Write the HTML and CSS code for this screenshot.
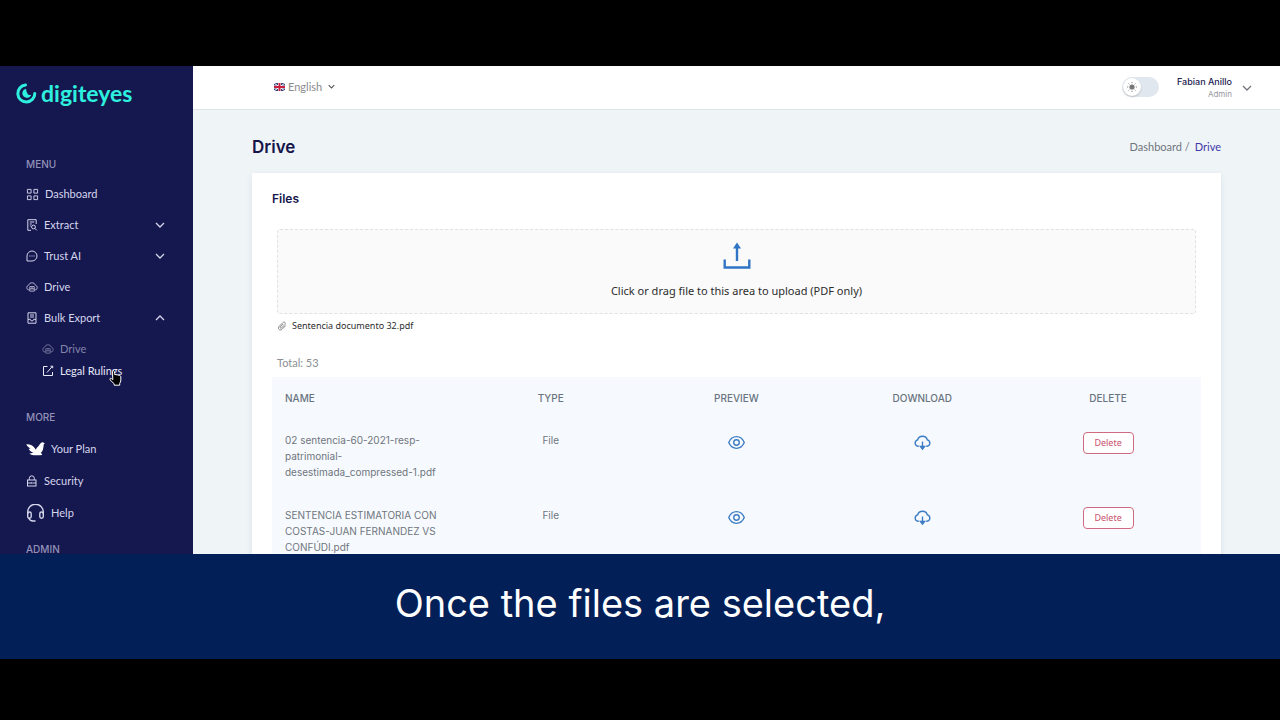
FILE: index.html
```
<!DOCTYPE html>
<html lang="en">
<head>
    <meta charset="UTF-8">
    <meta name="viewport" content="width=device-width, initial-scale=1.0">
    <title>Digiteyes - Drive</title>
    <link rel="stylesheet" href="styles.css">
</head>
<body>
    <!-- shared icons -->
    <svg class="sprite" width="0" height="0" aria-hidden="true">
        <symbol id="i-chevron" viewBox="0 0 10 10"><path d="M1 3l4 4 4-4"/></symbol>
        <symbol id="i-drive" viewBox="0 0 16 16"><path d="M4.5 12H4a3.2 3.2 0 0 1-.6-6.3 4.8 4.8 0 0 1 9.2 0A3.2 3.2 0 0 1 12 12h-.5M5 7.5h6v6H5zM5 10.5h6M8 7.5v3"/></symbol>
        <symbol id="i-eye" viewBox="0 0 16 16"><path d="M.7 8C2.300 4.300 4.900 2.500 8 2.500S13.700 4.300 15.300 8C13.700 11.700 11.100 13.500 8 13.500S2.300 11.700.7 8z"/><circle cx="8" cy="8" r="2.600"/></symbol>
        <symbol id="i-download" viewBox="0 0 16 16"><path d="M4.500 11.500H3.800a3 3 0 0 1-.4-5.900 4.800 4.800 0 0 1 9.200 0 3 3 0 0 1-.4 5.900h-.7M8 7v6.500"/><path class="solid" d="M6 11.700h4l-2 2.600z"/></symbol>
    </svg>

    <div class="app">
        <aside class="sidebar">
            <a class="logo" href="#">
                <svg viewBox="0 0 21 21" width="21" height="21">
                    <path class="logo-ring" d="M9.500 2A8.500 8.500 0 1 0 18.800 10.500"/>
                    <path class="logo-dot" d="M10 5.700a4.600 4.600 0 1 0 5.300 6c-1.600.6-3 .1-3.900-1.300-.9-1.400-1.100-3-1.400-4.700z"/>
                </svg>
                <span>digiteyes</span>
            </a>

            <h3>MENU</h3>
            <nav class="menu">
                <a href="#">
                    <svg class="icon wide" viewBox="0 0 14 14"><path d="M1.500 1.500h4v4h-4zM8.500 1.500h4v4h-4zM1.500 8.500h4v4h-4zM8.500 8.500h4v4h-4z"/></svg>
                    Dashboard
                </a>
                <a href="#">
                    <svg class="icon" viewBox="0 0 12 12"><path d="M5 11.300H1.800V.7h8.400V5M3.800 3h4.500M3.800 5h2M3.800 7h1"/><circle cx="7.500" cy="8" r="1.900"/><path d="M9 9.500l1.800 1.800"/></svg>
                    Extract
                    <svg class="chevron"><use href="#i-chevron"/></svg>
                </a>
                <a href="#">
                    <svg class="icon" viewBox="0 0 12 12"><path d="M1 11h5a5 5 0 1 0-5-5z"/><path d="M3.400 6h1M5.500 6h1M7.600 6h1"/></svg>
                    Trust AI
                    <svg class="chevron"><use href="#i-chevron"/></svg>
                </a>
                <a href="#">
                    <svg class="icon"><use href="#i-drive"/></svg>
                    Drive
                </a>
                <a href="#">
                    <svg class="icon" viewBox="0 0 12 12"><path d="M2 .8h8v10.400H2zM4 3h4M4 5h4M2 7.300h2.300l.8 1.500h1.800l.8-1.500H10"/></svg>
                    Bulk Export
                    <svg class="chevron open"><use href="#i-chevron"/></svg>
                </a>
            </nav>
            <nav class="submenu">
                <a class="dim" href="#">
                    <svg class="icon"><use href="#i-drive"/></svg>
                    Drive
                </a>
                <a class="hovered" href="#">
                    <svg class="icon" viewBox="0 0 12 12"><path d="M5.500 1.500h-4v9h9V7M5 7.500l5.500-6.300M8.500 1.200h2.200v2"/></svg>
                    Legal Rulings
                    <svg class="pointer" viewBox="0 0 13 16" width="13" height="16"><path d="M3.500 1.500c0-1.100 1.700-1.100 1.900 0L6 5c.4-.8 1.700-.6 1.900.2.500-.6 1.700-.4 1.900.4.700-.4 2 0 2 1.200V11l-1.100 2.500v1.700H5.200v-1.400L1 9.800c-.7-1 .6-2 1.500-1.200l1.300 1z"/></svg>
                </a>
            </nav>

            <h3>MORE</h3>
            <nav class="menu more">
                <a href="#">
                    <svg class="icon large filled" viewBox="0 0 18 16"><path d="M.3 3.500c3-.3 5.500.8 7.500 3 .6.700 1 1.400 1.300 2.100.8-1.300 1.600-2 2.400-2.900 1.200-1.500 2-2.900 2.800-3.600.7-.7 1.900-.7 2.600 0l1 .8c-.8.200-1.100.7-1.200 1.500-.2 3-.8 5.600-2.700 7.400.9.600 1.300 1.200 1.400 1.900-2.900.3-5.700.4-8.200.2-1.600-.2-2.600-.6-4.200-1.300 1.300-.1 2.700-.5 4-1.200C5 10.700 3.300 9.500 2.500 7.700c.8.100 1.500 0 2-.1C2.600 6.700 1 5.500.3 3.500z"/></svg>
                    Your Plan
                </a>
                <a href="#">
                    <svg class="icon" viewBox="0 0 12 12"><rect x="1.500" y="5" width="8.500" height="6"/><path d="M3.300 5V3.300a2.500 2.500 0 0 1 5 0V5M1.500 8H5M6.700 8H10M5.800 7v2"/></svg>
                    Security
                </a>
                <a href="#">
                    <svg class="icon large" viewBox="0 0 18 18"><path d="M1.200 10V8a7.800 7.800 0 0 1 15.600 0v2"/><rect x="1.200" y="8" width="3.500" height="6.300" rx="1.700"/><rect x="13.300" y="8" width="3.500" height="6.300" rx="1.700"/><path d="M2.300 14c.6 1.800 1.800 3 4.200 3h2.500"/></svg>
                    Help
                </a>
            </nav>

            <h3>ADMIN</h3>
        </aside>

        <div class="content">
            <header class="topbar">
                <button class="language" type="button">
                    <svg class="flag" viewBox="0 0 11 8" width="11" height="8"><path fill="#3d4380" d="M0 0h11v8H0z"/><path stroke="#fff" stroke-width="1" d="M0 0l11 8M11 0L0 8"/><path stroke="#fff" stroke-width="3" d="M5.500 0v8M0 4h11"/><path stroke="#c8203f" stroke-width="2" d="M5.500 0v8M0 4h11"/></svg>
                    English
                    <svg class="chevron"><use href="#i-chevron"/></svg>
                </button>
                <label class="theme-switch">
                    <input type="checkbox" aria-label="Dark mode">
                    <span class="knob">
                        <svg viewBox="0 0 10 10" width="10" height="10"><circle cx="5" cy="5" r="2.600" fill="#777"/><path stroke="#888" d="M5 0v1.200M5 8.800V10M0 5h1.200M8.800 5H10M1.500 1.500l.8.8M7.700 7.700l.8.8M8.500 1.500l-.8.8M2.300 7.700l-.8.8"/></svg>
                    </span>
                </label>
                <button class="profile" type="button">
                    <span class="who">
                        <strong>Fabian Anillo</strong>
                        <small>Admin</small>
                    </span>
                    <svg class="chevron"><use href="#i-chevron"/></svg>
                </button>
            </header>

            <main>
                <div class="page-head">
                    <h1>Drive</h1>
                    <nav class="breadcrumb"><a href="#">Dashboard /</a><a class="current" href="#">Drive</a></nav>
                </div>

                <section class="card">
                    <h2>Files</h2>
                    <button class="upload" type="button">
                        <svg viewBox="0 0 28 28" width="28" height="28"><path fill="none" stroke="#2f74c5" stroke-width="2.400" d="M1.700 17.500v8h24.600v-8M14 19V6"/><path fill="#2f74c5" d="M14 .5L18 6.500H10z"/></svg>
                        <span>Click or drag file to this area to upload (PDF only)</span>
                    </button>
                    <div class="attached">
                        <svg viewBox="0 0 10 10" width="10" height="10"><path d="M8.700 4.600L5 8.300C2.900 10.200.2 7.600 2 5.500l3.800-3.900c1.600-1.400 3.400.5 2.100 2L4.500 7c-.9.700-1.900-.2-1.200-1.100l3-3"/></svg>
                        Sentencia documento 32.pdf
                    </div>
                    <p class="total">Total: 53</p>

                    <table>
                        <thead>
                            <tr><th>NAME</th><th>TYPE</th><th>PREVIEW</th><th>DOWNLOAD</th><th>DELETE</th></tr>
                        </thead>
                        <tbody>
                            <tr>
                                <td>02 sentencia-60-2021-resp-<br>patrimonial-<br>desestimada_compressed-1.pdf</td>
                                <td>File</td>
                                <td><button class="icon-btn" type="button" aria-label="Preview"><svg><use href="#i-eye"/></svg></button></td>
                                <td><button class="icon-btn" type="button" aria-label="Download"><svg><use href="#i-download"/></svg></button></td>
                                <td><button class="delete" type="button">Delete</button></td>
                            </tr>
                            <tr>
                                <td>SENTENCIA ESTIMATORIA CON<br>COSTAS-JUAN FERNANDEZ VS<br>CONFÚDI.pdf</td>
                                <td>File</td>
                                <td><button class="icon-btn" type="button" aria-label="Preview"><svg><use href="#i-eye"/></svg></button></td>
                                <td><button class="icon-btn" type="button" aria-label="Download"><svg><use href="#i-download"/></svg></button></td>
                                <td><button class="delete" type="button">Delete</button></td>
                            </tr>
                        </tbody>
                    </table>
                </section>
            </main>
        </div>
    </div>

    <div class="caption">Once the files are selected,</div>
</body>
</html>
```

FILE: styles.css
```
* {
    box-sizing: border-box;
}

body {
    margin: 0;
    padding: 66px 0 61px;
    height: 100vh;
    display: flex;
    flex-direction: column;
    background: #000;
    color: #70757d;
    font: 11px/16px Lato, "Liberation Sans", sans-serif;
}

h1, h2, h3, p {
    margin: 0;
}

a {
    color: inherit;
    text-decoration: none;
}

button {
    padding: 0;
    border: none;
    background: none;
    color: inherit;
    font: inherit;
    cursor: pointer;
}

svg {
    flex: none;
}

.sprite {
    position: absolute;
}

.app {
    flex: 1;
    min-height: 0;
    display: flex;
    overflow: hidden;
    background: #eff4f7;
}

/* sidebar */
.sidebar {
    flex: none;
    width: 193px;
    padding: 12px 28px 0 26px;
    background: #15174f;
    color: #d5d6ec;
}

.logo {
    display: flex;
    align-items: center;
    gap: 4px;
    height: 30px;
    margin: 0 0 48px -10px;
    color: #2df0df;
    font: 700 23px/28px Lato, sans-serif;
}

.logo-ring {
    fill: none;
    stroke: #2df0df;
    stroke-width: 3;
    stroke-linecap: round;
}

.logo-dot {
    fill: #2df0df;
}

.sidebar h3 {
    height: 16px;
    color: #9293b8;
    font: 500 10px/16px Inter, sans-serif;
}

.menu {
    display: grid;
    gap: 11px;
    margin: 12px 0 26px;
}

.menu.more {
    gap: 12px;
    margin: 14px 0 18px;
}

.menu a {
    display: flex;
    align-items: center;
    gap: 6px;
    height: 20px;
}

.icon {
    width: 12px;
    height: 12px;
    fill: none;
    stroke: currentColor;
}

.icon.wide {
    width: 13px;
    height: 13px;
}

.icon.large {
    width: 19px;
    height: 18px;
    stroke-width: 1.4;
}

.icon.filled {
    fill: #fff;
    stroke: none;
}

.chevron {
    width: 10px;
    height: 10px;
    fill: none;
    stroke: currentColor;
    stroke-width: 1.3;
}

.menu .chevron {
    margin-left: auto;
}

.chevron.open {
    transform: rotate(180deg);
}

.submenu {
    display: grid;
    gap: 6px;
    margin: -13px 0 30px 16px;
}

.submenu a {
    position: relative;
    display: flex;
    align-items: center;
    gap: 6px;
}

.submenu .dim {
    color: #8384a9;
}

.submenu .hovered {
    color: #e8e9fa;
}

.pointer {
    position: absolute;
    left: 67px;
    top: 7px;
    fill: #000;
    stroke: #fff;
}

/* top bar */
.content {
    flex: 1;
    min-width: 0;
}

.topbar {
    display: flex;
    align-items: center;
    height: 44px;
    padding: 0 28px 2px 81px;
    border-bottom: 1px solid #dde3e6;
    background: #fff;
}

.language {
    display: flex;
    align-items: center;
    gap: 3px;
    margin-right: auto;
    color: #8b8b8e;
}

.language .chevron {
    width: 7px;
    height: 7px;
    margin-left: 3px;
    stroke: #555;
    stroke-width: 1.5;
}

.theme-switch {
    display: flex;
    align-items: center;
    width: 37px;
    height: 20px;
    border-radius: 10px;
    background: #e1e7ee;
}

.theme-switch input {
    position: absolute;
    opacity: 0;
}

.knob {
    display: grid;
    place-items: center;
    width: 18px;
    height: 18px;
    margin-left: 1px;
    border-radius: 50%;
    background: #fff;
    box-shadow: 0 1px 2px rgba(0, 0, 0, 0.2);
}

.profile {
    display: flex;
    align-items: center;
    gap: 10px;
    margin-left: 18px;
    padding-top: 2px;
    font-family: Inter, sans-serif;
    text-align: right;
}

.profile strong,
.profile small {
    display: block;
}

.profile strong {
    color: #1c2150;
    font-size: 9px;
    font-weight: 500;
    line-height: 12px;
}

.profile small {
    font-size: 8px;
    line-height: 12px;
    color: #96989e;
}

/* page */
main {
    padding: 24px 59px 0;
}

.page-head {
    display: flex;
    align-items: center;
    justify-content: space-between;
    height: 26px;
    margin-bottom: 13px;
}

h1 {
    color: #15154b;
    font: 600 17px/24px Inter, sans-serif;
}

.breadcrumb {
    display: flex;
    gap: 5px;
}

.breadcrumb .current {
    color: #4238a8;
}

.card {
    padding: 18px 20px;
    background: #fff;
    box-shadow: 0 2px 6px rgba(60, 70, 100, 0.1);
}

h2 {
    color: #15154b;
    font: 600 12px/16px Inter, sans-serif;
}

.upload {
    display: flex;
    flex-direction: column;
    align-items: center;
    gap: 13px;
    width: calc(100% - 10px);
    height: 85px;
    margin: 22px 5px 4px;
    padding-top: 12px;
    border: 1px dashed #dde3e2;
    border-radius: 3px;
    background: #fafafa;
    color: #2c2c2c;
    font: 11px/16px "Noto Sans", sans-serif;
}

.attached {
    display: flex;
    align-items: center;
    gap: 5px;
    margin: 0 5px 21px;
    color: #2c2c2c;
    font: 9px/16px "Noto Sans", sans-serif;
}

.attached svg {
    fill: none;
    stroke: #888;
}

.total {
    margin: 0 5px 6px;
    color: #8b8f93;
}

table {
    width: 100%;
    table-layout: fixed;
    border-collapse: collapse;
    background: #f6fafe;
}

th {
    height: 42px;
    padding: 0 13px;
    color: #6a7480;
    font: 500 10px/16px Inter, sans-serif;
}

td {
    height: 75px;
    padding: 13px 0;
    vertical-align: top;
    text-align: center;
    font: 10px/16px Inter, sans-serif;
}

th:first-child,
td:first-child {
    padding-left: 13px;
    text-align: left;
}

.icon-btn {
    display: block;
    margin: 2px auto 0;
    height: 17px;
}

.icon-btn svg {
    display: block;
    width: 17px;
    height: 17px;
    fill: none;
    stroke: #3b7cc4;
    stroke-width: 1.3;
}

.icon-btn .solid {
    fill: #3b7cc4;
}

.delete {
    width: 51px;
    height: 22px;
    border: 1px solid #cf6b80;
    border-radius: 4px;
    background: #fff;
    color: #c9506c;
    font: 9px/16px "Noto Sans", sans-serif;
}

.caption {
    height: 105px;
    flex: none;
    padding-bottom: 7px;
    display: grid;
    place-items: center;
    background: #021f57;
    color: #fff;
    font: 38px/48px Inter, sans-serif;
}
```
